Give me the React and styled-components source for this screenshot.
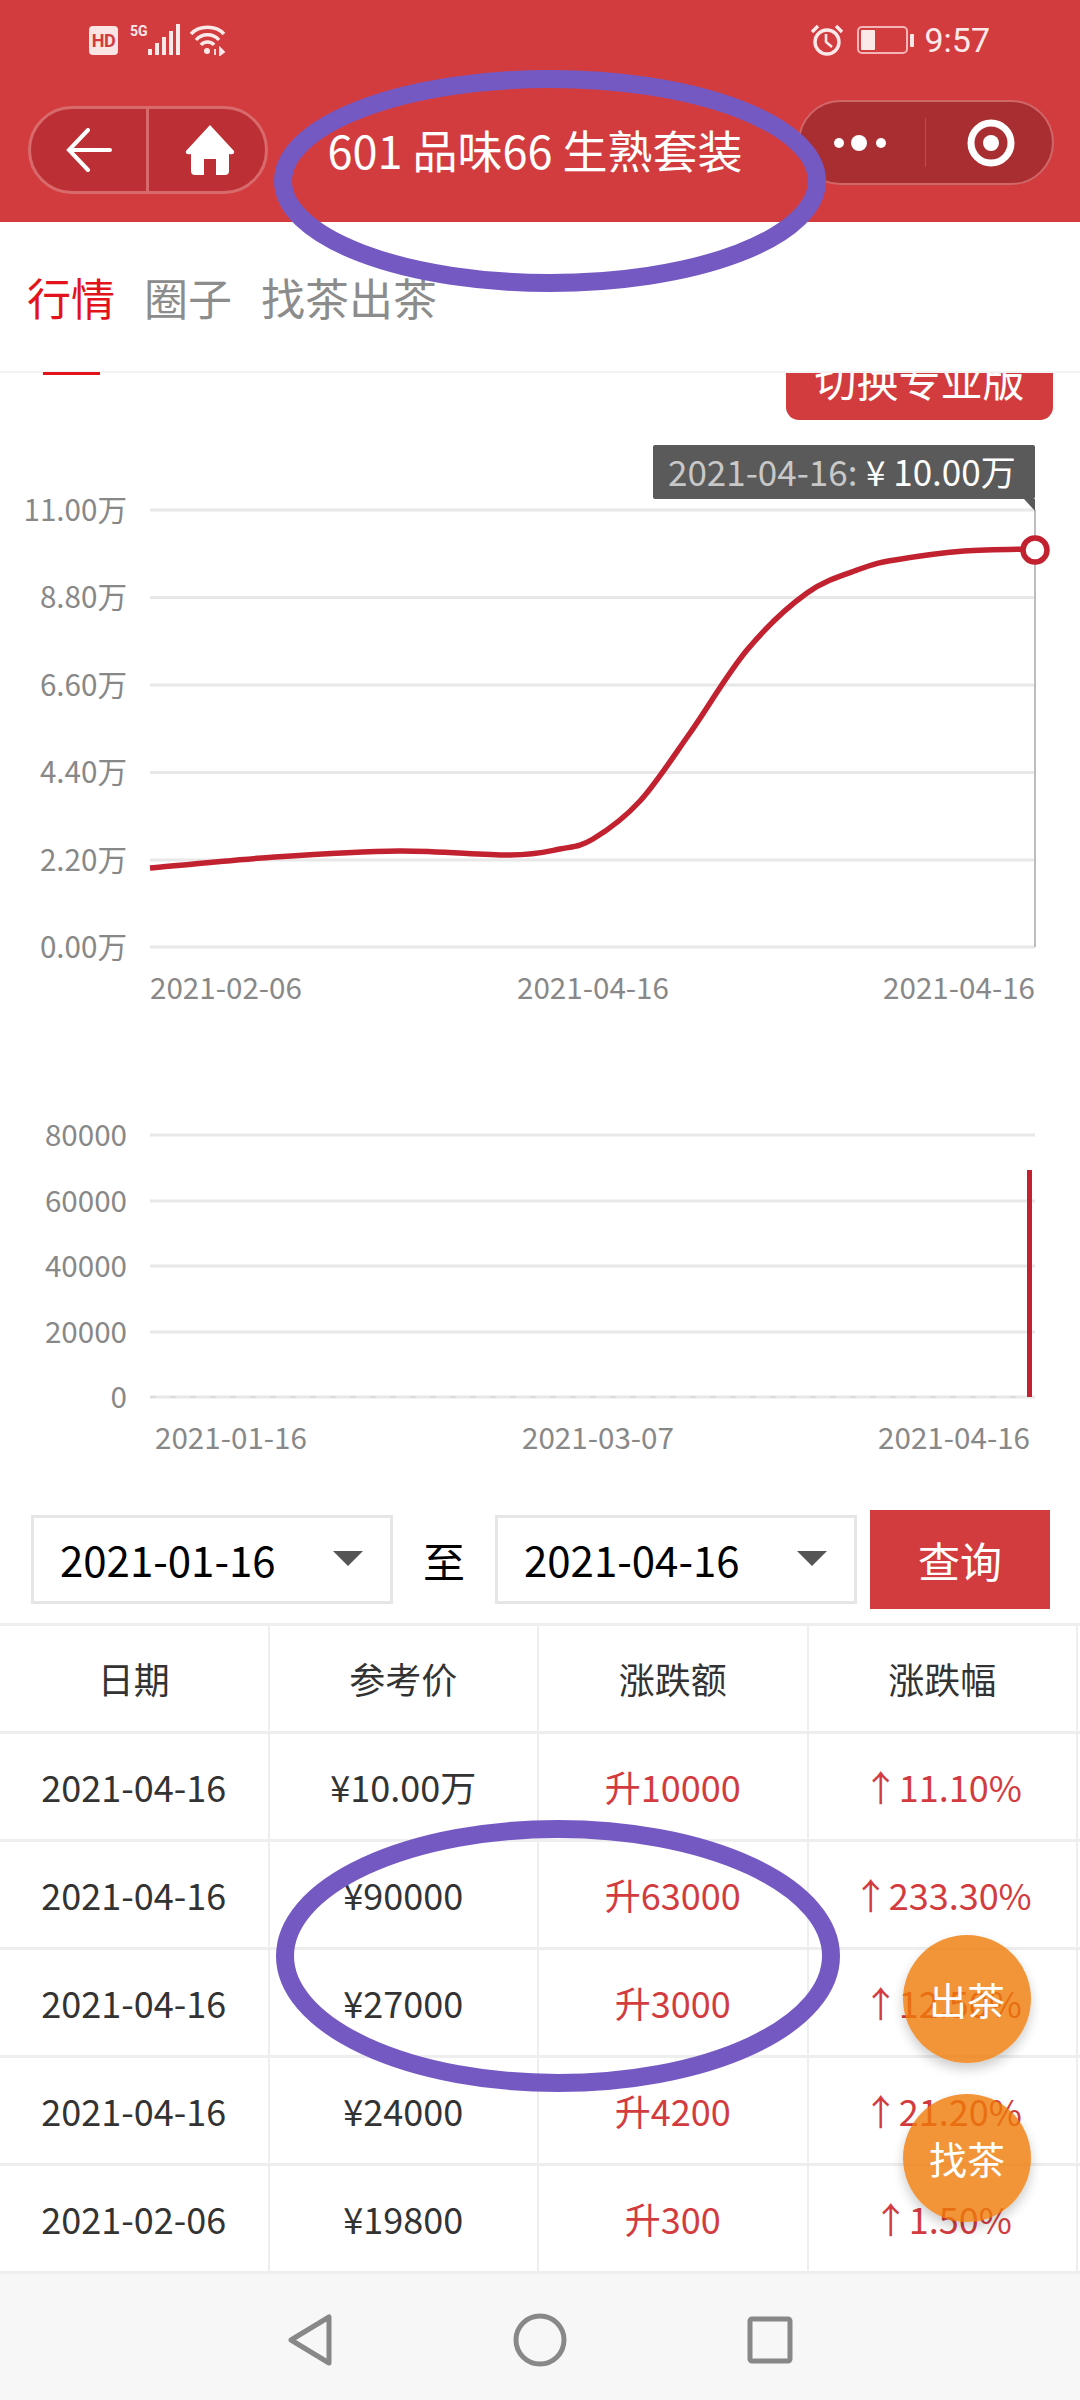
import React from "react";
import styled, { createGlobalStyle } from "styled-components";

const FONT = `"Noto Sans CJK SC", "Noto Sans", sans-serif`;
const RED = "#d33c3f";

const Global = createGlobalStyle`
  html, body { margin: 0; padding: 0; background: #fff; }
  body { font-family: ${FONT}; }
`;

const Page = styled.div`
  position: relative;
  width: 1080px;
  height: 2400px;
  overflow: hidden;
  display: flex;
  flex-direction: column;
  background: #fff;
  font-family: ${FONT};
`;

const Header = styled.header`
  height: 222px;
  background: ${RED};
  display: flex;
  flex-direction: column;
  flex-shrink: 0;
`;

const StatusBar = styled.div`
  height: 80px;
  display: flex;
  justify-content: space-between;
  align-items: center;
  padding: 0 90px 0 89px;
  color: #fbe9e9;
`;

const StatusGroup = styled.div`
  display: flex;
  align-items: center;
  gap: ${(p) => p.$gap || 0}px;
`;

const HdBadge = styled.span`
  width: 29px;
  height: 29px;
  border-radius: 4px;
  background: #fbe4e4;
  color: ${RED};
  font: 700 18px/29px "Roboto", sans-serif;
  text-align: center;
  letter-spacing: -0.5px;
`;

const FiveG = styled.span`
  font: 700 14px/14px "Roboto", sans-serif;
  align-self: flex-start;
  margin: 0 0 14px 12px;
  width: 18px;
`;

const WifiSlot = styled.span`
  display: flex;
  margin-left: 7px;
`;

const Clock = styled.span`
  font: 400 34px/34px "Roboto", sans-serif;
  margin-left: -4px;
`;

const NavRow = styled.div`
  flex: 1;
  display: flex;
  align-items: flex-start;
  padding: 20px 26px 0 28px;
  justify-content: space-between;
`;

const LeftCapsule = styled.div`
  width: 240px;
  height: 88px;
  margin-top: 6px;
  box-sizing: border-box;
  border: 3px solid #d86a6c;
  border-radius: 44px;
  background: #bc2f34;
  display: grid;
  grid-template-columns: 118px 1fr;
`;

const CapsuleCell = styled.div`
  display: flex;
  align-items: center;
  justify-content: center;
  padding-left: ${(p) => p.$nudge || 0}px;
  border-right: ${(p) => (p.$divided ? "3px solid #d86a6c" : "none")};
`;

const Title = styled.h1`
  margin: 6px 0 0 4px;
  font-size: 45px;
  line-height: 88px;
  font-weight: 400;
  color: #fff;
  white-space: pre;
`;

const RightCapsule = styled.div`
  width: 256px;
  height: 85px;
  box-sizing: border-box;
  border: 2px solid #cf6668;
  border-radius: 43px;
  background: #a92e31;
  display: grid;
  grid-template-columns: 126px 1fr;
`;

const RightCell = styled.div`
  position: relative;
  display: flex;
  align-items: center;
  justify-content: center;
  padding-left: ${(p) => p.$padL || 0}px;
  padding-right: ${(p) => p.$padR || 0}px;
  ${(p) =>
    p.$divided &&
    `&::after{content:"";position:absolute;right:0;top:16px;bottom:16px;width:1px;background:#bb4f50;}`}
`;

const TabBar = styled.nav`
  height: 151px;
  flex-shrink: 0;
  box-sizing: border-box;
  display: flex;
  gap: 29px;
  padding: 49px 0 0 27px;
  border-bottom: 2px solid #f3f3f3;
`;

const Tab = styled.div`
  position: relative;
  height: 52px;
  font-size: 44px;
  line-height: 52px;
  color: ${(p) => (p.$active ? "#e3131b" : "#8c8c8c")};
  ${(p) =>
    p.$active &&
    `&::after{content:"";position:absolute;left:16px;width:57px;height:3px;top:101px;background:#e3131b;}`}
`;

const Main = styled.main`
  flex: 1;
  display: flex;
  flex-direction: column;
  min-height: 0;
`;

const ToggleClip = styled.div`
  height: 47px;
  overflow: hidden;
  display: flex;
  justify-content: flex-end;
  align-items: flex-end;
  padding-right: 27px;
  flex-shrink: 0;
`;

const ToggleButton = styled.div`
  width: 267px;
  height: 90px;
  flex-shrink: 0;
  background: ${RED};
  border-radius: 0 0 13px 13px;
  color: #fff;
  font-size: 42px;
  line-height: 98px;
  text-align: center;
`;

const ChartSvg = styled.svg`
  display: block;
  flex-shrink: 0;
`;

const AxisText = styled.text`
  font-family: ${FONT};
  font-size: 29.6px;
  fill: #888;
  dominant-baseline: central;
`;

const TipText = styled.text`
  font-family: ${FONT};
  font-size: 35px;
  fill: ${(p) => (p.$strong ? "#fff" : "#c8c8c8")};
  dominant-baseline: central;
`;

const FilterRow = styled.div`
  display: flex;
  align-items: center;
  height: 99px;
  padding: 30px 30px 0 31px;
  flex-shrink: 0;
`;

const Select = styled.div`
  width: 362px;
  height: 89px;
  flex-shrink: 0;
  box-sizing: border-box;
  border: 3px solid #e6e6e6;
  display: flex;
  align-items: center;
  justify-content: space-between;
  padding: 0 27px 2px 26px;
  font-size: 42px;
  color: #000;
  &::after {
    content: "";
    border-style: solid;
    border-width: 15px 15px 0;
    border-color: #555 transparent transparent;
  }
`;

const To = styled.span`
  width: 102px;
  flex-shrink: 0;
  text-align: center;
  font-size: 42px;
  color: #000;
`;

const QueryButton = styled.div`
  width: 180px;
  height: 99px;
  flex-shrink: 0;
  margin-left: 13px;
  background: ${RED};
  color: #fff;
  font-size: 42px;
  line-height: 99px;
  text-align: center;
`;

const Table = styled.div`
  margin-top: 14px;
  border-top: 3px solid #eee;
  display: flex;
  flex-direction: column;
`;

const Row = styled.div`
  display: grid;
  grid-template-columns: 269.5px 269.5px 269.5px 269.5px;
  height: 108px;
  box-sizing: border-box;
  border-bottom: 3px solid #eee;
`;

const Cell = styled.div`
  box-sizing: border-box;
  border-right: 2px solid #eee;
  display: flex;
  align-items: center;
  justify-content: center;
  padding-bottom: 2px;
  font-size: 36px;
  white-space: pre;
  color: ${(p) => (p.$up ? "#d33c3f" : "#333")};
`;

const BottomNav = styled.div`
  height: 126px;
  flex-shrink: 0;
  box-sizing: border-box;
  padding-top: 5px;
  background: #f7f7f7;
  display: flex;
  align-items: center;
  justify-content: center;
`;

const NavSlot = styled.div`
  width: 230px;
  display: flex;
  justify-content: center;
`;

const Fab = styled.div`
  position: absolute;
  left: 903px;
  top: ${(p) => p.$top}px;
  width: 128px;
  height: 128px;
  border-radius: 50%;
  background: rgba(237, 122, 6, 0.8);
  box-shadow: 0 6px 12px rgba(0, 0, 0, 0.2);
  color: #fff;
  font-size: 38px;
  line-height: 128px;
  text-align: center;
`;

const Ring = styled.svg`
  position: absolute;
  left: ${(p) => p.$left}px;
  top: ${(p) => p.$top}px;
  pointer-events: none;
`;

const curvePoints = [
  [150, 868], [275, 857], [399, 851], [510, 855], [560, 849], [593, 839],
  [640, 801], [690, 733], [747, 650], [807, 593], [860, 569], [895, 560],
  [964, 551], [1030, 549],
];

function smooth(points) {
  let d = `M${points[0][0]} ${points[0][1]}`;
  for (let i = 0; i < points.length - 1; i++) {
    const p0 = points[i - 1] || points[i];
    const p1 = points[i];
    const p2 = points[i + 1];
    const p3 = points[i + 2] || p2;
    const c1x = p1[0] + (p2[0] - p0[0]) / 6;
    const c1y = p1[1] + (p2[1] - p0[1]) / 6;
    const c2x = p2[0] - (p3[0] - p1[0]) / 6;
    const c2y = p2[1] - (p3[1] - p1[1]) / 6;
    d += ` C${c1x} ${c1y} ${c2x} ${c2y} ${p2[0]} ${p2[1]}`;
  }
  return d;
}

const priceTicks = [
  ["11.00万", 510], ["8.80万", 597.5], ["6.60万", 685],
  ["4.40万", 772.5], ["2.20万", 860], ["0.00万", 947],
];
const volumeTicks = [
  ["80000", 1135], ["60000", 1201], ["40000", 1266], ["20000", 1332], ["0", 1397],
];

function PriceChart() {
  return (
    <ChartSvg width="1080" height="680" viewBox="0 420 1080 680">
      {priceTicks.map(([t, y]) => (
        <g key={t}>
          <line x1="150" x2="1035" y1={y} y2={y} stroke="#e8e8e8" strokeWidth="3" />
          <AxisText x="127" y={y - 2} textAnchor="end">{t}</AxisText>
        </g>
      ))}
      <AxisText x="150" y="986">2021-02-06</AxisText>
      <AxisText x="517" y="986">2021-04-16</AxisText>
      <AxisText x="1035" y="986" textAnchor="end">2021-04-16</AxisText>
      <line x1="1035" x2="1035" y1="510" y2="947" stroke="#bdbdbd" strokeWidth="2" />
      <path d={smooth(curvePoints)} fill="none" stroke="#c2212f" strokeWidth="5.5" />
      <circle cx="1035" cy="550" r="12" fill="#fff" stroke="#c2212f" strokeWidth="5.5" />
      <rect x="653" y="445" width="382" height="54" rx="2" fill="#5a5a5a" />
      <path d="M1024 499 L1035 499 L1035 511 Z" fill="#5a5a5a" />
      <TipText x="668" y="470">2021-04-16:</TipText>
      <TipText x="866" y="470" $strong>¥ 10.00万</TipText>
    </ChartSvg>
  );
}

function VolumeChart() {
  return (
    <ChartSvg width="1080" height="380" viewBox="0 1100 1080 380">
      {volumeTicks.map(([t, y]) => (
        <g key={t}>
          <line x1="150" x2="1035" y1={y} y2={y} stroke="#e8e8e8" strokeWidth="3" />
          <AxisText x="127" y={y - 2} textAnchor="end">{t}</AxisText>
        </g>
      ))}
      <line x1="150" x2="1028" y1="1397" y2="1397" stroke="#cfcfcf" strokeWidth="1" strokeDasharray="6 14" />
      <rect x="1027" y="1170" width="5" height="227" fill="#c2212f" />
      <AxisText x="155" y="1436">2021-01-16</AxisText>
      <AxisText x="522" y="1436">2021-03-07</AxisText>
      <AxisText x="1030" y="1436" textAnchor="end">2021-04-16</AxisText>
    </ChartSvg>
  );
}

const rows = [
  ["2021-04-16", "¥10.00万", "升10000", "↑11.10%"],
  ["2021-04-16", "¥90000", "升63000", "↑233.30%"],
  ["2021-04-16", "¥27000", "升3000", "↑12.50%"],
  ["2021-04-16", "¥24000", "升4200", "↑21.20%"],
  ["2021-02-06", "¥19800", "升300", "↑1.50%"],
];

const Signal = () => (
  <svg width="34" height="32" viewBox="0 0 34 32" fill="#fbe9e9">
    <rect x="0" y="25" width="4" height="6" />
    <rect x="7" y="19" width="4" height="12" />
    <rect x="14" y="13" width="4" height="18" />
    <rect x="21" y="7" width="4" height="24" />
    <rect x="28" y="0" width="4" height="31" />
  </svg>
);

const Wifi = () => (
  <svg width="38" height="32" viewBox="0 0 38 32" fill="none" stroke="#fbe9e9" strokeWidth="3.4">
    <path d="M2 10 C10 1 27 1 35 10" />
    <path d="M7 16 C13 9 24 9 30 16" />
    <path d="M12 21 C15 17 22 17 25 21" />
    <circle cx="18" cy="27" r="3" fill="#fbe9e9" stroke="none" />
    <path d="M26 25 L26 31 M31 24 L31 31 L35 28 Z" strokeWidth="1.8" fill="#fbe9e9" />
  </svg>
);

const Alarm = () => (
  <svg width="34" height="32" viewBox="0 0 34 32" fill="none" stroke="#fbe9e9" strokeWidth="3.4">
    <circle cx="17" cy="18" r="12" />
    <path d="M16 10 L16 18 L22 23" strokeWidth="2.6" />
    <path d="M2 8 L8 2 M32 8 L26 2" strokeWidth="3.4" />
  </svg>
);

const Battery = () => (
  <svg width="58" height="28" viewBox="0 0 58 28">
    <rect x="1" y="1" width="49" height="26" rx="4" fill="none" stroke="#f3b5b5" strokeWidth="2" />
    <rect x="4" y="4" width="14" height="20" rx="1" fill="#fbe9e9" />
    <rect x="53" y="8" width="4" height="13" rx="1" fill="#fbe9e9" />
  </svg>
);

const BackArrow = () => (
  <svg width="46" height="44" viewBox="0 0 46 44" fill="none" stroke="#fff" strokeWidth="4" strokeLinecap="round">
    <path d="M22 2 L3 22 L22 42 M3 22 L44 22" />
  </svg>
);

const HomeIcon = () => (
  <svg width="50" height="50" viewBox="0 0 50 50" fill="#fff">
    <path d="M25 0 L49 26 Q50 30 44 29 L44 46 Q44 50 40 50 L31 50 L31 34 L19 34 L19 50 L10 50 Q6 50 6 46 L6 29 Q0 30 1 26 Z" />
  </svg>
);

const Dots = () => (
  <svg width="52" height="20" viewBox="0 0 52 20" fill="#fff">
    <circle cx="5" cy="10" r="5" />
    <circle cx="25" cy="10" r="8" />
    <circle cx="47" cy="10" r="5" />
  </svg>
);

const Target = () => (
  <svg width="50" height="50" viewBox="0 0 50 50">
    <circle cx="25" cy="25" r="20" fill="none" stroke="#fff" strokeWidth="7" />
    <circle cx="25" cy="25" r="8" fill="#fff" />
  </svg>
);

const App = () => (
  <Page>
    <Global />
    <Header>
      <StatusBar>
        <StatusGroup>
          <HdBadge>HD</HdBadge>
          <FiveG>5G</FiveG>
          <Signal />
          <WifiSlot><Wifi /></WifiSlot>
        </StatusGroup>
        <StatusGroup $gap="13">
          <Alarm />
          <Battery />
          <Clock>9:57</Clock>
        </StatusGroup>
      </StatusBar>
      <NavRow>
        <LeftCapsule>
          <CapsuleCell $divided><BackArrow /></CapsuleCell>
          <CapsuleCell $nudge="5"><HomeIcon /></CapsuleCell>
        </LeftCapsule>
        <Title>601 品味66 生熟套装</Title>
        <RightCapsule>
          <RightCell $divided $padR="6"><Dots /></RightCell>
          <RightCell $padL="4"><Target /></RightCell>
        </RightCapsule>
      </NavRow>
    </Header>
    <TabBar>
      <Tab $active>行情</Tab>
      <Tab>圈子</Tab>
      <Tab>找茶出茶</Tab>
    </TabBar>
    <Main>
      <ToggleClip>
        <ToggleButton>切换专业版</ToggleButton>
      </ToggleClip>
      <PriceChart />
      <VolumeChart />
      <FilterRow>
        <Select>2021-01-16</Select>
        <To>至</To>
        <Select>2021-04-16</Select>
        <QueryButton>查询</QueryButton>
      </FilterRow>
      <Table>
        <Row>
          <Cell>日期</Cell>
          <Cell>参考价</Cell>
          <Cell>涨跌额</Cell>
          <Cell>涨跌幅</Cell>
        </Row>
        {rows.map((r, i) => (
          <Row key={i}>
            <Cell>{r[0]}</Cell>
            <Cell>{r[1]}</Cell>
            <Cell $up>{r[2]}</Cell>
            <Cell $up>{r[3]}</Cell>
          </Row>
        ))}
      </Table>
    </Main>
    <BottomNav>
      <NavSlot>
        <svg width="46" height="52" viewBox="0 0 46 52" fill="none" stroke="#888" strokeWidth="5" strokeLinejoin="round">
          <path d="M42 3 L42 49 L4 26 Z" />
        </svg>
      </NavSlot>
      <NavSlot>
        <svg width="54" height="54" viewBox="0 0 54 54" fill="none" stroke="#888" strokeWidth="5">
          <circle cx="27" cy="27" r="24" />
        </svg>
      </NavSlot>
      <NavSlot>
        <svg width="46" height="48" viewBox="0 0 46 48" fill="none" stroke="#888" strokeWidth="5" strokeLinejoin="round">
          <rect x="3" y="3" width="40" height="42" rx="2" />
        </svg>
      </NavSlot>
    </BottomNav>
    <Fab $top={1935}>出茶</Fab>
    <Fab $top={2094}>找茶</Fab>
    <Ring $left={270} $top={68} width="560" height="226" viewBox="0 0 560 226">
      <ellipse cx="280" cy="113" rx="267" ry="102" fill="none" stroke="#7559c3" strokeWidth="18" />
    </Ring>
    <Ring $left={270} $top={1816} width="576" height="280" viewBox="0 0 576 280">
      <ellipse cx="288" cy="140" rx="273" ry="127" fill="none" stroke="#7559c3" strokeWidth="18" />
    </Ring>
  </Page>
);

export default App;
